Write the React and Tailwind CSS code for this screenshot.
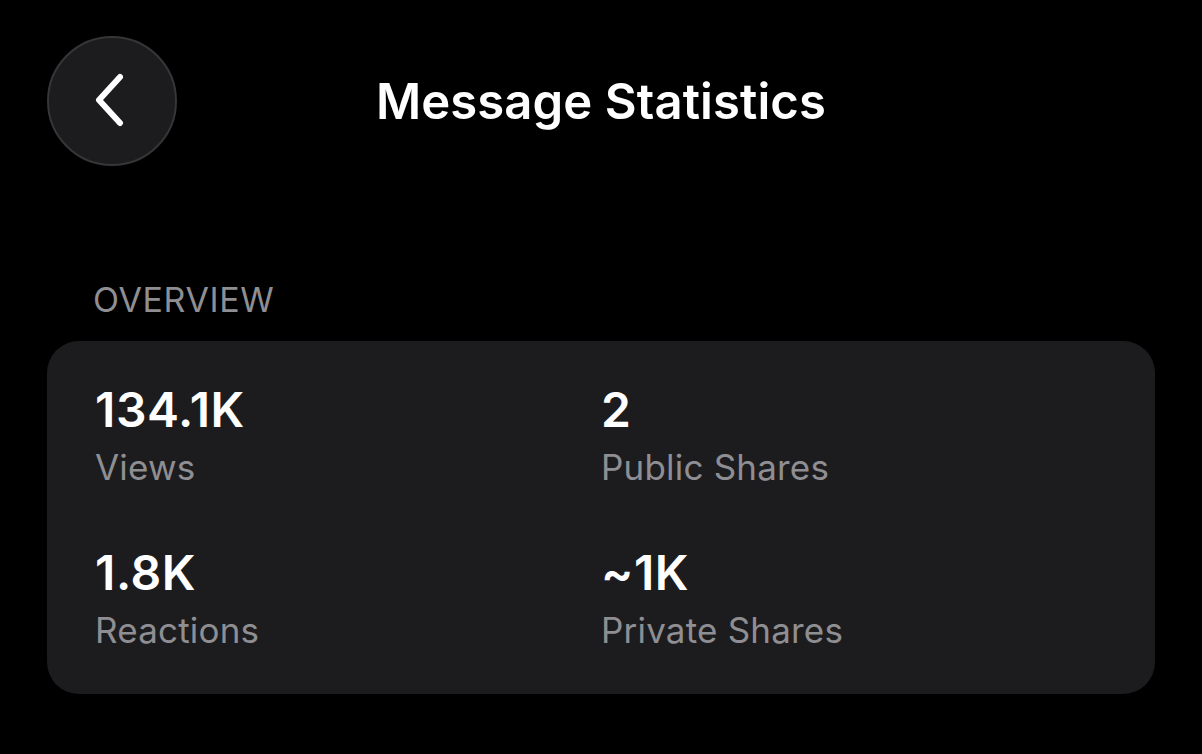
import React from 'react';

const stats = [
  { value: '134.1K', label: 'Views' },
  { value: '2', label: 'Public Shares' },
  { value: '1.8K', label: 'Reactions' },
  { value: '~1K', label: 'Private Shares' },
];

const BackIcon = () => (
  <svg width="40" height="56" viewBox="0 0 40 56" fill="none">
    <path d="M28 4 L7 27 L28 50" stroke="white" strokeWidth="6" strokeLinecap="round" strokeLinejoin="round" />
  </svg>
);

const App = () => {
  return (
    <div className="h-[754px] w-full bg-black text-white font-['Inter',sans-serif] overflow-hidden">
      <div className="grid grid-cols-[130px_1fr_130px] items-center px-[47px] pt-[36px]">
        <button className="w-[130px] h-[130px] rounded-full bg-[#1c1c1e] border-2 border-[#363638] flex items-center justify-center">
          <BackIcon />
        </button>
        <h1 className="text-center text-[49px] font-semibold tracking-[0.1px] leading-none">Message Statistics</h1>
        <div />
      </div>

      <div className="px-[47px] pt-[117px]">
        <div className="pl-[46px] text-[34px] leading-none text-[#8e8e93] tracking-[0.6px]">OVERVIEW</div>
        <div className="mt-[24px] rounded-[32px] bg-[#1c1c1e] px-[48px] pt-[41px] pb-[42px] grid grid-cols-2 gap-y-[56px]">
          {stats.map((s) => (
            <div key={s.label} className="flex flex-col gap-[7px]">
              <span className="text-[48px] font-semibold leading-[56px] tracking-[0.6px]">{s.value}</span>
              <span className="text-[35px] leading-[44px] text-[#8e8e93] tracking-[0.2px]">{s.label}</span>
            </div>
          ))}
        </div>
      </div>
    </div>
  );
};

export default App;
